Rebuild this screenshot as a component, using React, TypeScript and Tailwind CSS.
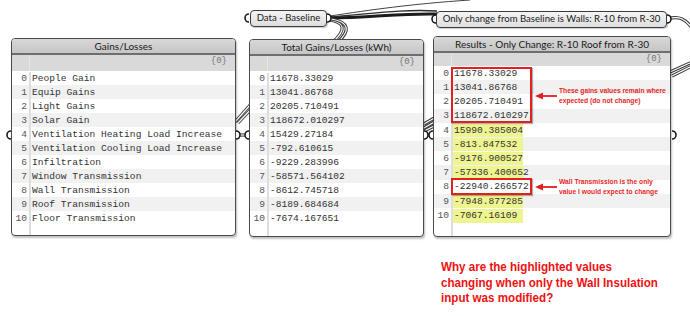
import type { ReactNode } from 'react';

const gainLabels = [
  'People Gain',
  'Equip Gains',
  'Light Gains',
  'Solar Gain',
  'Ventilation Heating Load Increase',
  'Ventilation Cooling Load Increase',
  'Infiltration',
  'Window Transmission',
  'Wall Transmission',
  'Roof Transmission',
  'Floor Transmission'
];

const baseline = [
  '11678.33029',
  '13041.86768',
  '20205.710491',
  '118672.010297',
  '15429.27184',
  '-792.610615',
  '-9229.283996',
  '-58571.564102',
  '-8612.745718',
  '-8189.684684',
  '-7674.167651'
];

const results = [
  '11678.33029',
  '13041.86768',
  '20205.710491',
  '118672.010297',
  '15990.385004',
  '-813.847532',
  '-9176.900527',
  '-57336.400652',
  '-22940.266572',
  '-7948.877285',
  '-7067.16109'
];

const highlighted = [4, 5, 6, 7, 9, 10];

const mono = "font-['Liberation_Mono',monospace]";
const ui = "font-['Lato','Open_Sans',sans-serif]";
const bold = "font-['Liberation_Sans',Arial,sans-serif] font-bold";

type PanelProps = {
  title: string;
  className: string;
  headClass: string;
  subClass: string;
  rowClass: string;
  items: ReactNode[];
};

function Panel({ title, className, headClass, subClass, rowClass, items }: PanelProps) {
  return (
    <div
      className={`absolute flex flex-col overflow-hidden rounded-[4px] border border-[#4a4a4a] bg-white shadow-[1px_2px_2px_rgba(0,0,0,0.25)] ${className}`}
    >
      <div
        className={`flex items-center justify-center border-b-2 border-[#6e6e6e] bg-gradient-to-b from-[#d8d8d8] to-[#c6c6c6] text-[10px] text-[#1a1a1a] ${ui} ${headClass}`}
      >
        {title}
      </div>
      <div className={`flex bg-[#d9d9d9] ${subClass}`}>
        <div className="w-[18px] shrink-0 border-r border-[#e6e6e6]" />
        <div className={`flex-1 pr-[8px] text-right text-[9px] text-[#777] ${mono}`}>{'{0}'}</div>
      </div>
      <div className="flex flex-1 flex-col">
        {items.map((item, i) => (
          <div
            key={i}
            className={`flex items-center pt-[2px] ${mono} text-[9.6px] text-[#333] ${rowClass} ${
              i % 2 === 1 ? 'bg-[#f1f1f1]' : 'bg-white'
            }`}
          >
            <div className="w-[18px] shrink-0 pr-[3px] text-right text-[#555]">{i}</div>
            <div className="whitespace-nowrap pl-[2px]">{item}</div>
          </div>
        ))}
        <div className="flex-1" />
      </div>
      <div className="pointer-events-none absolute bottom-0 left-[17px] top-[33px] w-[2px] bg-[#dedede]" />
    </div>
  );
}

function Pill({ text, className }: { text: string; className: string }) {
  return (
    <div
      className={`absolute flex items-center justify-center rounded-[4px] border border-[#3c3c3c] bg-gradient-to-b from-[#f4f4f4] to-[#dedede] text-[9.6px] text-[#1a1a1a] shadow-[1px_1px_1px_rgba(0,0,0,0.2)] ${ui} ${className}`}
    >
      {text}
    </div>
  );
}

function Wire({ d }: { d: string }) {
  return (
    <g fill="none">
      <path d={d} stroke="#3a3a3a" strokeWidth="3.2" />
      <path d={d} stroke="#ffffff" strokeWidth="1.2" />
    </g>
  );
}

function Knob({ x, y, dir }: { x: number; y: number; dir: 'l' | 'r' }) {
  const d =
    dir === 'l'
      ? `M${x},${y - 4} A4,4 0 0 0 ${x},${y + 4}`
      : `M${x},${y - 4} A4,4 0 0 1 ${x},${y + 4}`;
  return <path d={d} fill="white" stroke="#1a1a1a" strokeWidth="1.6" />;
}

function Arrow() {
  return (
    <svg width="22" height="8" viewBox="0 0 22 8" className="shrink-0">
      <path d="M7,4 L22,4" stroke="#e41e1e" strokeWidth="1.8" />
      <path d="M0,4 L8,0.5 L8,7.5 Z" fill="#e41e1e" />
    </svg>
  );
}

function Note({ lines, className }: { lines: string[]; className: string }) {
  return (
    <div className={`absolute flex items-center gap-[2px] text-[#e41e1e] ${className}`}>
      <Arrow />
      <div className={`origin-left scale-x-[0.84] whitespace-nowrap text-[8px] leading-[9.5px] ${bold}`}>
        {lines.map((l) => (
          <div key={l}>{l}</div>
        ))}
      </div>
    </div>
  );
}

export default function App() {
  return (
    <div className="relative h-[316px] w-[690px] overflow-hidden bg-white">
      <svg className="pointer-events-none absolute inset-0" width="690" height="316">
        <path d="M328,18 C370,18 400,13 437,14" stroke="#1c1c1c" strokeWidth="3" fill="none" />
        <path d="M328,17 C370,14 400,9 437,11" stroke="#2c2c2c" strokeWidth="1.4" fill="none" />
        <path d="M330,16 C370,10 410,4 470,0" stroke="#444" strokeWidth="1" fill="none" />
        <Wire d="M328,20 C346,22 346,30 333,42" />
        <Wire d="M331,19 C350,22 350,31 338,42" />
        <Wire d="M667,19 C680,15 686,20 692,28" />
        <Wire d="M670,72 L692,62" />
        <Wire d="M672,76 L692,66" />
        <Wire d="M235,122 L251,104" />
        <Wire d="M238,123 L254,106" />
        <Wire d="M236,135 L249,135" />
        <Wire d="M424,124 L436,117" />
        <Wire d="M424,128 L436,121" />
        <Wire d="M424,131 L436,125" />
        <Wire d="M424,135 L433,135" />
      </svg>

      <Pill text="Data - Baseline" className="left-[250px] top-[10px] h-[17px] w-[77px]" />
      <Pill
        text="Only change from Baseline is Walls: R-10 from R-30"
        className="left-[436px] top-[11px] h-[17px] w-[231px]"
      />

      <Panel
        title="Gains/Losses"
        className="left-[11px] top-[38px] h-[198px] w-[225px]"
        headClass="h-[16px]"
        subClass="h-[16px]"
        rowClass="h-[14px]"
        items={gainLabels}
      />
      <Panel
        title="Total Gains/Losses (kWh)"
        className="left-[249px] top-[39px] h-[198px] w-[175px]"
        headClass="h-[16px]"
        subClass="h-[15px]"
        rowClass="h-[14px]"
        items={baseline}
      />
      <Panel
        title="Results - Only Change: R-10 Roof from R-30"
        className="left-[433px] top-[36px] h-[201px] w-[238px]"
        headClass="h-[16px]"
        subClass="h-[13px]"
        rowClass="h-[14.2px]"
        items={results.map((v, i) =>
          highlighted.includes(i) ? (
            <span className={`-ml-[2px] inline-block bg-[#eef48f] pl-[2px] ${i === 7 ? 'w-[72px]' : 'w-[71px]'}`}>
              {v}
            </span>
          ) : (
            v
          )
        )}
      />

      <svg className="pointer-events-none absolute inset-0" width="690" height="316">
        <Knob x={11} y={135} dir="l" />
        <Knob x={236} y={135} dir="r" />
        <Knob x={249} y={135} dir="l" />
        <Knob x={424} y={135} dir="r" />
        <Knob x={433} y={135} dir="l" />
        <Knob x={672} y={135} dir="r" />
        <Knob x={249} y={18} dir="l" />
        <Knob x={327} y={18} dir="r" />
        <Knob x={436} y={19} dir="l" />
        <Knob x={667} y={19} dir="r" />
      </svg>

      <div className="absolute left-[451px] top-[67px] h-[56px] w-[81px] border-2 border-[#e32020] shadow-[1px_1px_1px_rgba(0,0,0,0.3)]" />
      <div className="absolute left-[451px] top-[178px] h-[17px] w-[81px] border-2 border-[#e32020] shadow-[1px_1px_1px_rgba(0,0,0,0.3)]" />

      <Note className="left-[535px] top-[86px]" lines={['These gains values remain where', 'expected (do not change)']} />
      <Note
        className="left-[535px] top-[177px]"
        lines={['Wall Transmission is the only', 'value I would expect to change']}
      />

      <div
        className={`absolute left-[441px] top-[259px] origin-left scale-x-[0.86] whitespace-nowrap text-[13.5px] leading-[15.5px] text-[#ee1111] ${bold}`}
      >
        <div>Why are the highlighted values</div>
        <div>changing when only the Wall Insulation</div>
        <div>input was modified?</div>
      </div>
    </div>
  );
}
